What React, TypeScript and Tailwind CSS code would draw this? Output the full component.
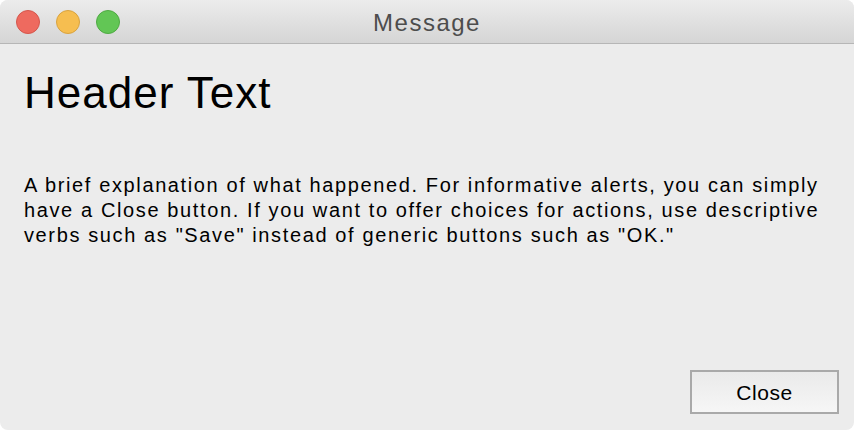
import React from "react";

const font = { fontFamily: '"Liberation Sans", Arial, sans-serif' };

// --- traffic light dots ---
function Dot({ fill, ring }: { fill: string; ring: string }) {
  return <span className={`block w-6 h-6 rounded-full border ${fill} ${ring}`} />;
}

export default function App() {
  return (
    <div className="w-[854px] h-[430px] bg-white" style={font}>
      <div className="flex flex-col h-full rounded-[8px] overflow-hidden bg-[#ececec]">
        {/* --- TITLE BAR --- */}
        <div className="relative flex items-center h-[44px] shrink-0 border-b border-[#b6b6b6] bg-gradient-to-b from-[#ececec] to-[#d5d5d5]">
          <div className="flex items-center gap-4 pl-4">
            <Dot fill="bg-[#ee6a5f]" ring="border-[#d5564c]" />
            <Dot fill="bg-[#f6be50]" ring="border-[#d9a33f]" />
            <Dot fill="bg-[#62c655]" ring="border-[#4faa43]" />
          </div>
          <div className="absolute inset-0 flex items-center justify-center pt-[2px] text-[24px] tracking-[1.5px] text-[#4d4d4d] pointer-events-none">
            Message
          </div>
        </div>

        {/* --- CONTENT --- */}
        <div className="flex flex-col flex-1 px-6">
          <h1 className="mt-[27px] text-[44px] leading-[44px] tracking-[1px] text-black font-normal">Header Text</h1>
          <p className="mt-[58px] text-[20px] leading-[25px] tracking-[1.62px] text-black whitespace-nowrap">
            A brief explanation of what happened. For informative alerts, you can simply
            <br />
            have a Close button. If you want to offer choices for actions, use descriptive
            <br />
            verbs such as "Save" instead of generic buttons such as "OK."
          </p>
        </div>

        {/* --- FOOTER --- */}
        <div className="flex justify-end pr-[15px] pb-[16px]">
          <button className="w-[149px] h-[44px] shrink-0 border-2 border-[#a9a9a9] bg-gradient-to-b from-[#eaeaea] to-[#f6f6f6] pt-[2px] text-[21px] tracking-[0.6px] text-black">
            Close
          </button>
        </div>
      </div>
    </div>
  );
}
